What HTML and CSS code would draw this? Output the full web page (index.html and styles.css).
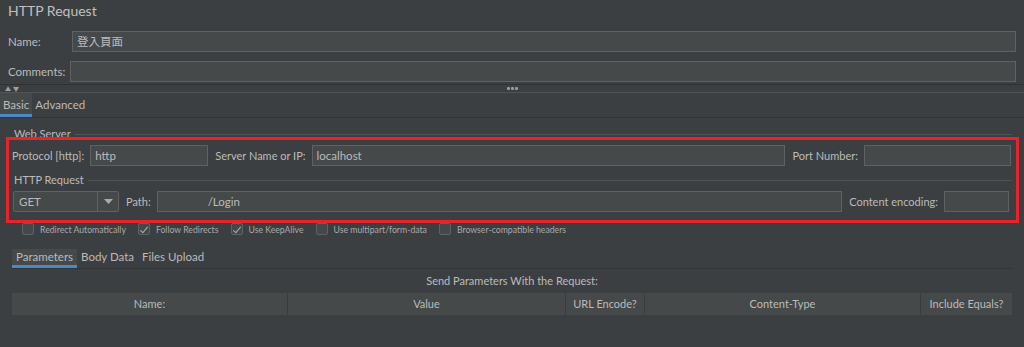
FILE: index.html
```html
<!DOCTYPE html>
<html lang="en">
<head>
    <meta charset="UTF-8">
    <title>HTTP Request</title>
    <link rel="stylesheet" href="styles.css">
</head>
<body>
    <h1 class="title">HTTP Request</h1>

    <div class="field-row name-row">
        <label>Name:</label>
        <div class="input">登入頁面</div>
    </div>
    <div class="field-row comments-row">
        <label>Comments:</label>
        <div class="input"></div>
    </div>

    <!-- splitter -->
    <div class="splitter">
        <span class="arrows">▲▼</span>
        <span class="dots"><i></i><i></i><i></i></span>
    </div>

    <div class="tabs main-tabs">
        <span class="tab active">Basic</span>
        <span class="tab">Advanced</span>
    </div>

    <div class="panel">
        <div class="group-title">Web Server</div>
        <div class="form-row">
            <label>Protocol [http]:</label>
            <div class="input protocol">http</div>
            <label class="gap-left">Server Name or IP:</label>
            <div class="input grow">localhost</div>
            <label class="gap-left">Port Number:</label>
            <div class="input port"></div>
        </div>

        <div class="group-title second">HTTP Request</div>
        <div class="form-row">
            <div class="combo">
                <span class="combo-value">GET</span>
                <span class="combo-arrow"><svg width="9" height="5" viewBox="0 0 9 5"><path d="M0 0H9L4.5 5Z" fill="#a9abad"/></svg></span>
            </div>
            <label class="gap-left">Path:</label>
            <div class="input grow path">/Login</div>
            <label class="gap-left">Content encoding:</label>
            <div class="input encoding"></div>
        </div>

        <!-- annotation box -->
        <div class="highlight"></div>
    </div>

    <div class="checks">
        <span class="check"><i class="box"></i>Redirect Automatically</span>
        <span class="check"><i class="box on"></i>Follow Redirects</span>
        <span class="check"><i class="box on"></i>Use KeepAlive</span>
        <span class="check"><i class="box"></i>Use multipart/form-data</span>
        <span class="check"><i class="box"></i>Browser-compatible headers</span>
    </div>

    <div class="tabs sub-tabs">
        <span class="tab active">Parameters</span>
        <span class="tab">Body Data</span>
        <span class="tab">Files Upload</span>
    </div>

    <p class="table-caption">Send Parameters With the Request:</p>
    <div class="table-head">
        <span class="col c-name">Name:</span>
        <span class="col c-value">Value</span>
        <span class="col c-enc">URL Encode?</span>
        <span class="col c-type">Content-Type</span>
        <span class="col c-eq">Include Equals?</span>
    </div>
</body>
</html>
```

FILE: styles.css
```css
* {
    margin: 0;
    padding: 0;
    box-sizing: border-box;
}

html, body {
    width: 1024px;
    height: 347px;
    overflow: hidden;
    background: #3c3f41;
    color: #bbbbbb;
    font-family: Lato, 'Noto Sans CJK TC', sans-serif;
    font-size: 11.5px;
}

/* Title */
.title {
    font-size: 14px;
    font-weight: normal;
    color: #c0c0c0;
    padding: 0 0 0 8px;
    height: 24px;
    line-height: 22px;
}

/* Name / Comments */
.field-row {
    display: flex;
    align-items: center;
    padding: 0 8px;
}

.field-row label {
    width: 64px;
    flex: none;
}

.name-row {
    height: 30px;
    padding-top: 4px;
}

.comments-row {
    height: 30px;
    padding-top: 4px;
}

.comments-row label {
    width: 62px;
}

.input {
    height: 21px;
    background: #45494a;
    border: 1px solid #5f6263;
    padding: 0 4px;
    line-height: 19px;
    color: #bbbbbb;
    white-space: nowrap;
    overflow: hidden;
}

.field-row .input {
    flex: 1;
}

/* Splitter */
.splitter {
    height: 9px;
    border-top: 1px solid #2f3133;
    border-bottom: 1px solid #515456;
    display: flex;
    align-items: center;
    position: relative;
}

.arrows {
    font-size: 6px;
    color: #a0a0a0;
    padding-left: 5px;
    letter-spacing: 2px;
}

.dots {
    position: absolute;
    left: 507px;
    top: 2px;
    display: flex;
    gap: 1px;
}

.dots i {
    width: 3px;
    height: 3px;
    background: #9a9a9a;
    border-radius: 1px;
}

/* Tabs */
.tabs {
    display: flex;
    border-bottom: 1px solid #323435;
}

.tab {
    padding: 0 3px;
    border-bottom: 3px solid transparent;
}

.main-tabs {
    height: 25px;
    align-items: stretch;
}

.main-tabs .tab {
    line-height: 23px;
}

.main-tabs .tab.active {
    background: #45494a;
    border-bottom-color: #4a88c7;
}

/* Panel with group titles */
.panel {
    position: relative;
    padding: 0 12px;
}

.group-title {
    display: flex;
    align-items: center;
    gap: 4px;
    padding-left: 2px;
    height: 13px;
    margin-top: 9px;
    font-size: 11px;
}

.group-title::after {
    content: "";
    flex: 1;
    border-top: 1px solid #515456;
    margin-top: 1px;
}

.group-title.second {
    margin-top: 7px;
}

.form-row {
    display: flex;
    align-items: center;
    margin-top: 5px;
    height: 21px;
}

.form-row label {
    flex: none;
    margin-right: 6px;
    font-size: 11px;
    white-space: nowrap;
}

.form-row label.gap-left {
    margin-left: 7px;
}

.grow {
    flex: 1;
}

.protocol {
    width: 118px;
}

.port {
    width: 147px;
    margin-right: 1px;
}

.path {
    padding-left: 50px;
}

.encoding {
    width: 65px;
    margin-right: 3px;
}

.combo {
    width: 106px;
    height: 21px;
    display: flex;
    border: 1px solid #5f6263;
    border-radius: 2px;
    background: #45494a;
    margin-left: 1px;
}

.combo-value {
    flex: 1;
    padding-left: 5px;
    line-height: 19px;
}

.combo-arrow {
    width: 21px;
    border-left: 1px solid #5f6263;
    display: flex;
    align-items: center;
    justify-content: center;
}

.highlight {
    position: absolute;
    left: 6px;
    right: 5px;
    top: 10px;
    height: 86px;
    border: 3px solid #e8232a;
    pointer-events: none;
}

/* Checkboxes */
.checks {
    display: flex;
    padding-left: 22px;
    margin-top: 10px;
    height: 14px;
    align-items: center;
    font-size: 8.7px;
    color: #a9a9a9;
}

.check {
    display: flex;
    align-items: center;
    margin-right: 12px;
}

.box {
    width: 12px;
    height: 12px;
    border: 1px solid #5f6263;
    border-radius: 2px;
    background: #43494a;
    margin-right: 6px;
    position: relative;
}

.box.on::after {
    content: "";
    position: absolute;
    left: 3px;
    top: 1px;
    width: 3px;
    height: 7px;
    border-right: 1.5px solid #b0b0b0;
    border-bottom: 1.5px solid #b0b0b0;
    transform: rotate(40deg);
}

/* Sub tabs */
.sub-tabs {
    margin: 13px 12px 0;
    height: 20px;
}

.sub-tabs .tab {
    padding: 0 4px;
    line-height: 16px;
}

.sub-tabs .tab.active {
    background: #45494a;
    border-bottom-color: #4a88c7;
}

.table-caption {
    text-align: center;
    height: 24px;
    line-height: 24px;
    font-size: 11px;
}

.table-head {
    display: flex;
    margin: 0 12px;
    height: 22px;
    background: #45494a;
}

.col {
    text-align: center;
    line-height: 22px;
    font-size: 11px;
    border-right: 1px solid #393b3d;
}

.c-name { width: 276px; }
.c-value { width: 278px; }
.c-enc { width: 79px; }
.c-type { width: 276px; }
.c-eq { flex: 1; border-right: none; }
```
